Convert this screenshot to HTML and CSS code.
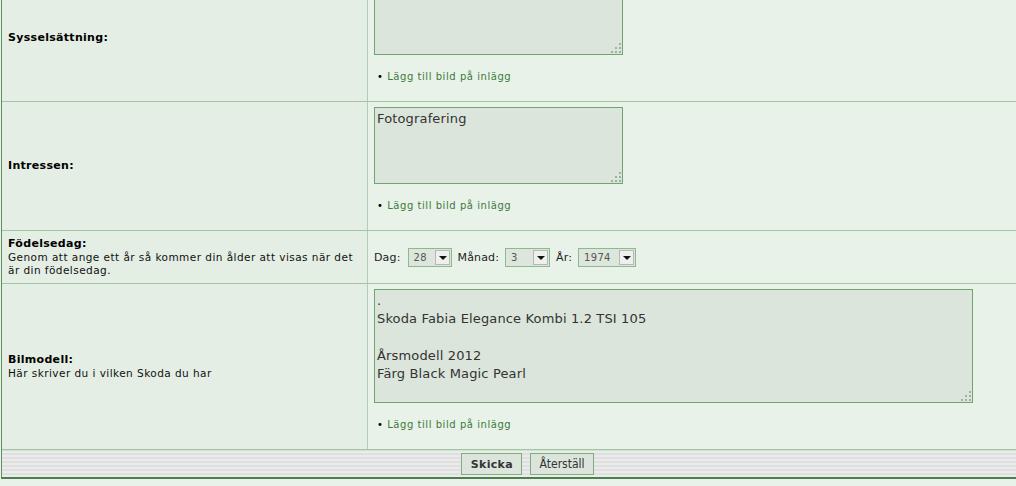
FILE: index.html
```html
<!DOCTYPE html>
<html lang="sv">
<head>
<meta charset="utf-8">
<title>Profil</title>
<link rel="stylesheet" href="styles.css">
</head>
<body>
<form class="form">
  <div class="row row-first">
    <div class="label"><strong>Sysselsättning:</strong></div>
    <div class="field">
      <textarea class="ta ta-small ta-cut"></textarea>
      <div class="addimg"><span class="dot">•</span> <a href="#">Lägg till bild på inlägg</a></div>
    </div>
  </div>
  <div class="row">
    <div class="label"><strong>Intressen:</strong></div>
    <div class="field">
      <textarea class="ta ta-small">Fotografering</textarea>
      <div class="addimg"><span class="dot">•</span> <a href="#">Lägg till bild på inlägg</a></div>
    </div>
  </div>
  <div class="row">
    <div class="label label-top">
      <strong>Födelsedag:</strong>
      <div class="desc">Genom att ange ett år så kommer din ålder att visas när det är din födelsedag.</div>
    </div>
    <div class="field field-date">
      <span class="dl">Dag:</span>
      <span class="sel sel-d"><span class="val">28</span><span class="arr"></span></span>
      <span class="dl">Månad:</span>
      <span class="sel sel-m"><span class="val">3</span><span class="arr"></span></span>
      <span class="dl">År:</span>
      <span class="sel sel-y"><span class="val">1974</span><span class="arr"></span></span>
    </div>
  </div>
  <div class="row">
    <div class="label">
      <strong>Bilmodell:</strong>
      <div class="desc">Här skriver du i vilken Skoda du har</div>
    </div>
    <div class="field">
      <textarea class="ta ta-big">.
Skoda Fabia Elegance Kombi 1.2 TSI 105

Årsmodell 2012
Färg Black Magic Pearl</textarea>
      <div class="addimg"><span class="dot">•</span> <a href="#">Lägg till bild på inlägg</a></div>
    </div>
  </div>
  <div class="foot">
    <button type="button" class="btn btn-main">Skicka</button>
    <button type="button" class="btn">Återställ</button>
  </div>
</form>
</body>
</html>
```
FILE: styles.css
```css
html, body {
  margin: 0;
  padding: 0;
}
body {
  background: #e8f2e8;
  font-family: "DejaVu Sans", Verdana, sans-serif;
  color: #000;
  overflow: hidden;
  width: 1016px;
  height: 486px;
}
.form {
  width: 1040px;
  margin-left: 1px;
  border-left: 1px solid #5e8f5e;
  border-bottom: 2px solid #4e7e4e;
}
.row {
  display: grid;
  grid-template-columns: 366px 1fr;
  border-bottom: 1px solid #a2c6a2;
}
.row-first {
  margin-top: -25px;
}
.label {
  background: #e4eee4;
  border-right: 1px solid #b0cfb0;
  padding: 0 6px;
  display: flex;
  flex-direction: column;
  justify-content: center;
  font-size: 11px;
}
.label strong {
  font-size: 11px;
  line-height: 14px;
  letter-spacing: 0.3px;
}
.label-top {
  justify-content: flex-start;
  padding-top: 6px;
}
.desc {
  font-size: 10.5px;
  line-height: 13px;
  letter-spacing: 0.45px;
  color: #111;
}
.field {
  background: #e8f2e8;
  padding: 5px 5px 0 6px;
}
.ta {
  display: block;
  box-sizing: border-box;
  margin: 0;
  border: 1px solid #6fa56f;
  font-family: "DejaVu Sans", Verdana, sans-serif;
  font-size: 13px;
  line-height: 18.3px;
  letter-spacing: 0.15px;
  color: #333;
  padding: 2px 2px;
  resize: none;
  background-color: #dbe5db;
  background-image:
    linear-gradient(#a5aea5, #a5aea5),
    linear-gradient(#a5aea5, #a5aea5),
    linear-gradient(#a5aea5, #a5aea5),
    linear-gradient(#a5aea5, #a5aea5),
    linear-gradient(#a5aea5, #a5aea5),
    linear-gradient(#a5aea5, #a5aea5);
  background-size: 2px 2px;
  background-repeat: no-repeat;
  background-position:
    right 1px bottom 1px,
    right 5px bottom 1px,
    right 9px bottom 1px,
    right 1px bottom 5px,
    right 5px bottom 5px,
    right 1px bottom 9px;
}
.ta-small {
  width: 249px;
  height: 77px;
}
.ta-cut {
  height: 75px;
}
.ta-big {
  width: 599px;
  height: 114px;
}
.addimg {
  margin: 15px 0 18px 3px;
  font-size: 10px;
  line-height: 13px;
  letter-spacing: 0.55px;
}
.dot {
  color: #000;
  font-size: 10px;
}
.addimg a {
  color: #3d7a3d;
  text-decoration: none;
}
.field-date {
  display: flex;
  align-items: center;
  gap: 6px;
  min-height: 52px;
  padding: 0 5px 0 6px;
  box-sizing: border-box;
  font-size: 11px;
  letter-spacing: 0.15px;
  color: #222;
}
.sel {
  display: inline-flex;
  align-items: center;
  justify-content: space-between;
  box-sizing: border-box;
  height: 19px;
  border: 1px solid #8cba8c;
  background: #dce6dc;
  padding: 0 1px 0 5px;
  font-size: 10px;
  letter-spacing: 0.3px;
  color: #555;
}
.sel-d { width: 44px; margin-left: 1px; }
.sel-m { width: 45px; }
.sel-y { width: 58px; }
.arr {
  width: 15px;
  height: 15px;
  box-sizing: border-box;
  background: #eef0ee;
  border: 1px solid #b8b8b8;
  position: relative;
}
.arr::after {
  content: "";
  position: absolute;
  left: 3px;
  top: 5px;
  border-left: 4px solid transparent;
  border-right: 4px solid transparent;
  border-top: 4px solid #111;
}
.foot {
  height: 26px;
  display: flex;
  justify-content: center;
  align-items: center;
  gap: 8px;
  padding-left: 11px;
  border-top: 1px solid #cfe2cf;
  background: repeating-linear-gradient(#ebebeb 0, #ebebeb 2px, #dfdfdf 2px, #dfdfdf 4px);
}
.btn {
  height: 22px;
  box-sizing: border-box;
  background: #dbe5db;
  border: 1px solid #7fae7f;
  font-family: "DejaVu Sans Condensed", "DejaVu Sans", sans-serif;
  font-size: 12px;
  color: #333;
  padding: 0 8px;
}
.btn-main {
  font-family: "DejaVu Sans", Verdana, sans-serif;
  font-weight: bold;
  font-size: 11px;
  letter-spacing: 0.3px;
  width: 61px;
}
```
